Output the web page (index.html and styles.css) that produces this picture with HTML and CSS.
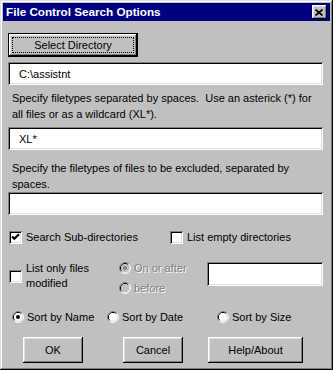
FILE: index.html
```html
<!DOCTYPE html>
<html lang="en">

<head>
    <meta charset="UTF-8">
    <meta name="viewport" content="width=device-width, initial-scale=1.0">
    <title>File Control Search Options</title>

    <link rel="stylesheet" href="styles.css">
</head>

<body>
    <div class="window">
        <div class="titlebar">
            <span class="title">File Control Search Options</span>
            <span class="close">
                <svg width="8" height="7" viewBox="0 0 8 7">
                    <path d="M0.5 0.5L7.5 6.5M7.5 0.5L0.5 6.5" stroke="#000" stroke-width="1.7" fill="none" />
                </svg>
            </span>
        </div>

        <div class="content">
            <div class="btn default select-dir"><span class="focus">Select Directory</span></div>
            <input class="field gap-top" type="text" value="C:\assistnt">

            <p class="label first">Specify filetypes separated by spaces.&nbsp; Use an asterick (*) for<br>all files or as a wildcard (XL*).</p>
            <input class="field gap-top" type="text" value="XL*">

            <p class="label second">Specify the filetypes of files to be excluded, separated by<br>spaces.</p>
            <input class="field" type="text" value="">

            <div class="checks">
                <div class="check">
                    <span class="box">
                        <svg width="9" height="9" viewBox="0 0 9 9">
                            <path d="M1 3.5L3.3 5.8L8 1.2" stroke="#000" stroke-width="2.2" fill="none" />
                        </svg>
                    </span>
                    <span>Search Sub-directories</span>
                </div>
                <div class="check">
                    <span class="box"></span>
                    <span>List empty directories</span>
                </div>
            </div>

            <div class="modified">
                <div class="check">
                    <span class="box"></span>
                    <span class="two-line">List only files<br>modified</span>
                </div>
                <div class="when">
                    <div class="radio disabled">
                        <svg width="12" height="12" viewBox="0 0 12 12">
                            <path d="M2.11 9.89A5.5 5.5 0 0 1 9.89 2.11" stroke="#808080" fill="none" />
                            <path d="M2.82 9.18A4.5 4.5 0 0 1 9.18 2.82" stroke="#000" fill="none" />
                            <path d="M9.89 2.11A5.5 5.5 0 0 1 2.11 9.89" stroke="#fff" fill="none" />
                            <path d="M9.18 2.82A4.5 4.5 0 0 1 2.82 9.18" stroke="#dfdfdf" fill="none" />
                            <circle cx="6" cy="6" r="4" fill="#c0c0c0" />
                            <circle cx="6" cy="6" r="2" fill="#808080" />
                        </svg>
                        <span>On or after</span>
                    </div>
                    <div class="radio disabled">
                        <svg width="12" height="12" viewBox="0 0 12 12">
                            <path d="M2.11 9.89A5.5 5.5 0 0 1 9.89 2.11" stroke="#808080" fill="none" />
                            <path d="M2.82 9.18A4.5 4.5 0 0 1 9.18 2.82" stroke="#000" fill="none" />
                            <path d="M9.89 2.11A5.5 5.5 0 0 1 2.11 9.89" stroke="#fff" fill="none" />
                            <path d="M9.18 2.82A4.5 4.5 0 0 1 2.82 9.18" stroke="#dfdfdf" fill="none" />
                            <circle cx="6" cy="6" r="4" fill="#c0c0c0" />
                        </svg>
                        <span>before</span>
                    </div>
                </div>
                <input class="field date" type="text" value="">
            </div>

            <div class="sort">
                <div class="radio">
                    <svg width="12" height="12" viewBox="0 0 12 12">
                        <path d="M2.11 9.89A5.5 5.5 0 0 1 9.89 2.11" stroke="#808080" fill="none" />
                        <path d="M2.82 9.18A4.5 4.5 0 0 1 9.18 2.82" stroke="#000" fill="none" />
                        <path d="M9.89 2.11A5.5 5.5 0 0 1 2.11 9.89" stroke="#fff" fill="none" />
                        <path d="M9.18 2.82A4.5 4.5 0 0 1 2.82 9.18" stroke="#dfdfdf" fill="none" />
                        <circle cx="6" cy="6" r="4" fill="#fff" />
                        <circle cx="6" cy="6" r="2" fill="#000" />
                    </svg>
                    <span>Sort by Name</span>
                </div>
                <div class="radio">
                    <svg width="12" height="12" viewBox="0 0 12 12">
                        <path d="M2.11 9.89A5.5 5.5 0 0 1 9.89 2.11" stroke="#808080" fill="none" />
                        <path d="M2.82 9.18A4.5 4.5 0 0 1 9.18 2.82" stroke="#000" fill="none" />
                        <path d="M9.89 2.11A5.5 5.5 0 0 1 2.11 9.89" stroke="#fff" fill="none" />
                        <path d="M9.18 2.82A4.5 4.5 0 0 1 2.82 9.18" stroke="#dfdfdf" fill="none" />
                        <circle cx="6" cy="6" r="4" fill="#fff" />
                    </svg>
                    <span>Sort by Date</span>
                </div>
                <div class="radio">
                    <svg width="12" height="12" viewBox="0 0 12 12">
                        <path d="M2.11 9.89A5.5 5.5 0 0 1 9.89 2.11" stroke="#808080" fill="none" />
                        <path d="M2.82 9.18A4.5 4.5 0 0 1 9.18 2.82" stroke="#000" fill="none" />
                        <path d="M9.89 2.11A5.5 5.5 0 0 1 2.11 9.89" stroke="#fff" fill="none" />
                        <path d="M9.18 2.82A4.5 4.5 0 0 1 2.82 9.18" stroke="#dfdfdf" fill="none" />
                        <circle cx="6" cy="6" r="4" fill="#fff" />
                    </svg>
                    <span>Sort by Size</span>
                </div>
            </div>

            <div class="actions">
                <div class="btn ok">OK</div>
                <div class="btn cancel">Cancel</div>
                <div class="btn help">Help/About</div>
            </div>
        </div>
    </div>
</body>

</html>
```

FILE: styles.css
```css
body {
    margin: 0;
    font-family: 'Liberation Sans', Arial, sans-serif;
    font-size: 11px;
    color: #000;
    background-color: #c0c0c0;
    user-select: none;
}

.window {
    width: 333px;
    height: 370px;
    box-sizing: border-box;
    padding: 3px;
    background-color: #c0c0c0;
    box-shadow: inset -1px -1px #000, inset 1px 1px #dfdfdf, inset -2px -2px #808080, inset 2px 2px #fff;
}

.titlebar {
    display: flex;
    align-items: center;
    justify-content: space-between;
    height: 18px;
    padding: 0 3px;
    background-color: #000080;
}

.title {
    color: #fff;
    font-weight: bold;
    font-size: 11.7px;
    line-height: 18px;
}

.close {
    display: flex;
    align-items: center;
    justify-content: center;
    width: 15px;
    height: 14px;
    background-color: #c0c0c0;
    box-shadow: inset -1px -1px #000, inset 1px 1px #fff, inset -2px -2px #808080, inset 2px 2px #dfdfdf;
}

.close svg {
    margin-left: -1px;
}

.content {
    display: flex;
    flex-direction: column;
    padding: 12px 7px 0 5px;
}

/* buttons */
.btn {
    display: flex;
    align-items: center;
    justify-content: center;
    box-sizing: border-box;
    background-color: #c0c0c0;
    box-shadow: inset -1px -1px #000, inset 1px 1px #fff, inset -2px -2px #808080, inset 2px 2px #dfdfdf;
}

.btn.default {
    border: 1px solid #000;
    padding: 3px;
}

.select-dir {
    width: 130px;
    height: 24px;
}

.focus {
    flex: 1;
    align-self: stretch;
    display: flex;
    align-items: center;
    justify-content: center;
    border: 1px dotted #000;
}

/* text fields */
.field {
    display: block;
    box-sizing: border-box;
    width: 100%;
    height: 23px;
    margin: 0;
    padding: 0 0 0 11px;
    border: none;
    outline: none;
    background-color: #fff;
    font-family: inherit;
    font-size: 11px;
    color: #000;
    box-shadow: inset 1px 1px #808080, inset -1px -1px #fff, inset 2px 2px #000, inset -2px -2px #dfdfdf;
}

.gap-top {
    margin-top: 5px;
}

.label {
    margin: 0;
    padding-left: 4px;
    line-height: 16px;
}

.label.first {
    margin-top: 5px;
}

.label.second {
    margin-top: 10px;
}

/* checkboxes */
.check {
    display: flex;
    align-items: center;
    gap: 4px;
    line-height: 16px;
}

.box {
    display: flex;
    align-items: center;
    justify-content: center;
    flex-shrink: 0;
    width: 13px;
    height: 13px;
    background-color: #fff;
    box-shadow: inset 1px 1px #808080, inset -1px -1px #fff, inset 2px 2px #000, inset -2px -2px #dfdfdf;
}

.checks {
    display: grid;
    grid-template-columns: 161px 1fr;
    margin-top: 14px;
    padding-left: 1px;
}

.modified {
    display: grid;
    grid-template-columns: 111px 88px 1fr;
    align-items: start;
    margin-top: 17px;
    height: 34px;
}

.modified .check {
    padding-left: 1px;
    margin-top: -1px;
}

.two-line {
    line-height: 15px;
}

.when {
    display: flex;
    flex-direction: column;
    gap: 4px;
    margin-top: -2px;
}

.date {
    height: 24px;
}

/* radios */
.radio {
    display: flex;
    align-items: center;
    gap: 3px;
    height: 16px;
}

.radio svg {
    flex-shrink: 0;
}

.disabled span {
    color: #808080;
    text-shadow: 1px 1px #fff;
}

.sort {
    display: grid;
    grid-template-columns: 95px 110px 1fr;
    margin-top: 13px;
    padding-left: 4px;
}

.actions {
    display: flex;
    margin-top: 12px;
    padding-left: 15px;
}

.actions .btn {
    height: 26px;
}

.ok {
    width: 60px;
}

.cancel {
    width: 60px;
    margin-left: 40px;
}

.help {
    width: 95px;
    margin-left: 25px;
}
```
